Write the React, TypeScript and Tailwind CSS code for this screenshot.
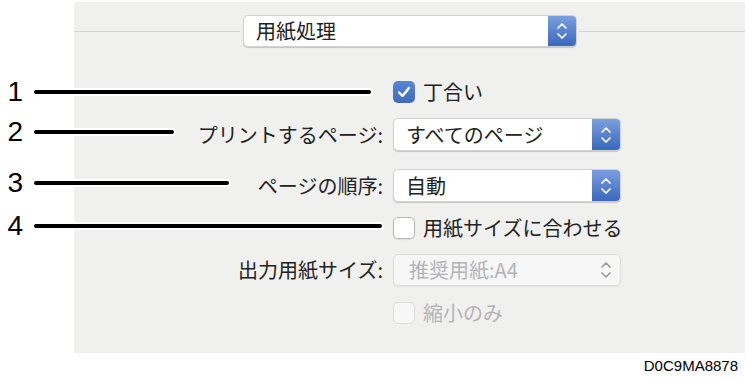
import React from 'react';

const JP = { fontFamily: '"Noto Sans CJK JP", "Noto Sans", sans-serif' };

function Chevrons({ color }: { color: string }) {
  return (
    <svg width="12" height="18" viewBox="0 0 12 18" fill="none" stroke={color} strokeWidth="1.7" strokeLinecap="round" strokeLinejoin="round">
      <path d="M2 6 L6 2 L10 6" />
      <path d="M2 12 L6 16 L10 12" />
    </svg>
  );
}

function Popup({ label, width, height = 33 }: { label: string; width: number; height?: number }) {
  return (
    <div
      className="flex items-stretch bg-white rounded-[5px] border border-[#d2d2d2] shadow-[0_1px_1px_rgba(0,0,0,0.18)] overflow-hidden"
      style={{ width, height }}
    >
      <span className="flex-1 flex items-center pl-[12px] text-[20px] text-[#222]">{label}</span>
      <span className="w-[28px] flex items-center justify-center bg-gradient-to-b from-[#7ba0de] to-[#3a67bd]">
        <Chevrons color="#ffffff" />
      </span>
    </div>
  );
}

function DisabledPopup({ label }: { label: string }) {
  return (
    <div className="flex items-stretch w-[228px] h-[32px] bg-[#f6f6f6] rounded-[5px] border border-[#dedede] shadow-[0_1px_1px_rgba(0,0,0,0.06)]">
      <span className="flex-1 flex items-center pl-[15px] text-[20px] text-[#b4b4b4]">{label}</span>
      <span className="w-[28px] flex items-center justify-center">
        <Chevrons color="#9d9d9d" />
      </span>
    </div>
  );
}

function Check({ checked, disabled, text }: { checked?: boolean; disabled?: boolean; text: string }) {
  return (
    <div className="flex items-center gap-[8px] h-[22px]">
      {checked ? (
        <span className="w-[22px] h-[22px] rounded-[5px] bg-gradient-to-b from-[#5b86d3] to-[#3f6cc0] flex items-center justify-center">
          <svg width="14" height="12" viewBox="0 0 14 12" fill="none" stroke="#fff" strokeWidth="2.4" strokeLinecap="round" strokeLinejoin="round">
            <path d="M2 6.5 L5.5 10 L12 2" />
          </svg>
        </span>
      ) : (
        <span
          className={
            disabled
              ? 'w-[22px] h-[22px] rounded-[5px] bg-[#f7f7f7] border border-[#dcdcdc]'
              : 'w-[22px] h-[22px] rounded-[5px] bg-white border border-[#b8b8b8] shadow-[0_1px_1px_rgba(0,0,0,0.08)]'
          }
        />
      )}
      <span className={disabled ? 'text-[20px] text-[#b4b4b4]' : 'text-[20px] text-[#222]'}>{text}</span>
    </div>
  );
}

function Row({ label, children, className }: { label?: string; children: React.ReactNode; className: string }) {
  return (
    <div className={'flex items-center gap-[10px] ' + className}>
      <span className="w-[309px] text-right text-[20px] text-[#222] whitespace-nowrap">{label}</span>
      <div>{children}</div>
    </div>
  );
}

const callouts = [
  { n: '1', top: 76, w: 337 },
  { n: '2', top: 116, w: 140 },
  { n: '3', top: 167, w: 195 },
  { n: '4', top: 210, w: 348 },
];

export default function App() {
  return (
    <div className="relative w-[745px] h-[380px] bg-white overflow-hidden" style={JP}>
      {/* dialog panel */}
      <div className="ml-[74px] mt-[2px] h-[351px] bg-[#f0f0ef]">
        <div className="flex items-center pt-[13px]">
          <div className="w-[166px] h-px bg-[#d3d3d3]" />
          <div className="ml-[3px] mr-[2px]">
            <Popup label="用紙処理" width={334} height={32} />
          </div>
          <div className="flex-1 h-px bg-[#d3d3d3]" />
        </div>

        <Row className="mt-[34px] h-[22px]">
          <Check checked text="丁合い" />
        </Row>
        <Row label="プリントするページ:" className="mt-[15px] h-[33px]">
          <Popup label="すべてのページ" width={228} />
        </Row>
        <Row label="ページの順序:" className="mt-[18px] h-[33px]">
          <Popup label="自動" width={228} />
        </Row>
        <Row className="mt-[15px] h-[22px]">
          <Check text="用紙サイズに合わせる" />
        </Row>
        <Row label="出力用紙サイズ:" className="mt-[15px] h-[32px]">
          <DisabledPopup label="推奨用紙:A4" />
        </Row>
        <Row className="mt-[16px] h-[22px]">
          <Check disabled text="縮小のみ" />
        </Row>
      </div>

      {/* callout numbers and leader lines */}
      {callouts.map(c => (
        <div key={c.n} className="absolute left-0 h-[32px] flex items-center" style={{ top: c.top }}>
          <span className="w-[23px] text-right text-[28px] leading-none text-black" style={{ fontFamily: '"Liberation Sans", Arial, sans-serif' }}>
            {c.n}
          </span>
          <span className="ml-[11px] h-[4px] bg-black rounded-full ring-2 ring-white" style={{ width: c.w }} />
        </div>
      ))}

      <div className="absolute right-[7px] bottom-[3px] text-[15px] text-black" style={{ fontFamily: '"Liberation Sans", Arial, sans-serif' }}>
        D0C9MA8878
      </div>
    </div>
  );
}
